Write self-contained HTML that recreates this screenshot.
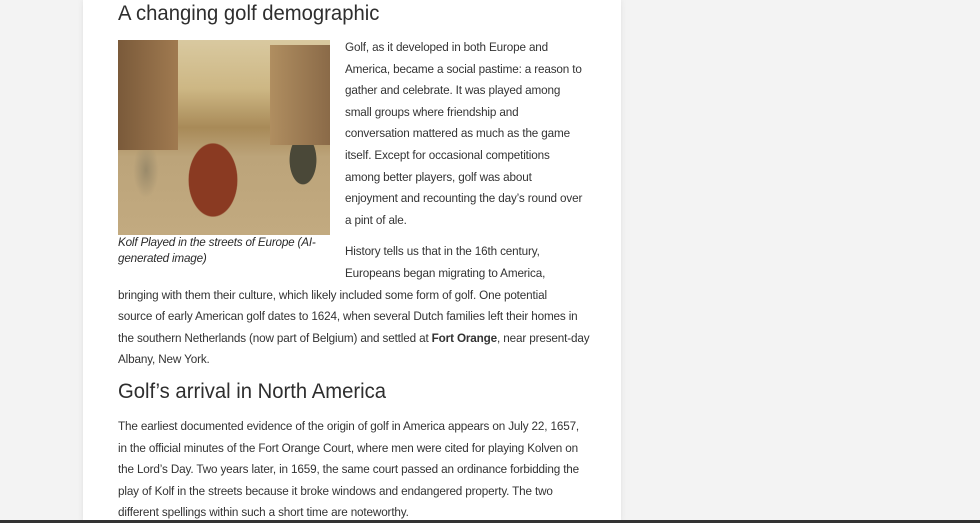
<!DOCTYPE html>
<html><head><meta charset="utf-8"><style>
body{margin:0;width:980px;height:523px;background:#f3f3f3;position:relative;overflow:hidden;font-family:"Liberation Sans",sans-serif;color:#333}
.page{position:absolute;left:83px;top:0;width:538px;height:523px;background:#fff;box-shadow:0 0 6px rgba(0,0,0,.08)}
.l{position:absolute;white-space:nowrap;font-size:12.2px;letter-spacing:-0.15px;line-height:16px;transform:scaleX(.96);transform-origin:0 0}
h2{position:absolute;margin:0;font-weight:normal;font-size:21px;color:#2e2e2e;white-space:nowrap;line-height:26px;transform:scaleX(.965);transform-origin:0 0}
.img{position:absolute;left:118px;top:40px;width:212px;height:195px;background:
radial-gradient(ellipse 40px 60px at 95px 140px,#8a3a22 0,#8a3a22 60%,transparent 62%),
radial-gradient(ellipse 22px 40px at 185px 120px,#4a4838 0,#4a4838 60%,transparent 62%),
radial-gradient(ellipse 18px 40px at 28px 130px,#9a8a6a 0,transparent 70%),
linear-gradient(180deg,#d9c9a0 0,#cdb784 25%,#a88a58 45%,#bca47a 60%,#c2aa80 100%)}
.img:before{content:"";position:absolute;left:0;top:0;width:60px;height:110px;background:linear-gradient(90deg,#7a5a3a,#a07a50)}
.img:after{content:"";position:absolute;right:0;top:5px;width:60px;height:100px;background:linear-gradient(270deg,#8a6a48,#b08e60)}
.cap{position:absolute;font-style:italic;font-size:12.2px;color:#2a2a2a;white-space:nowrap;letter-spacing:-0.2px;transform:scaleX(.96);transform-origin:0 0}
.bar{position:absolute;left:0;top:520px;width:980px;height:3px;background:#333}
</style></head><body>
<div class="page"></div>
<h2 style="left:118px;top:1px">A changing golf demographic</h2>
<div class="img"></div>
<div class="cap" style="left:118px;top:235px">Kolf Played in the streets of Europe (AI-</div>
<div class="cap" style="left:118px;top:251px">generated image)</div>
<div class="l" style="left:345px;top:39px">Golf, as it developed in both Europe and</div>
<div class="l" style="left:345px;top:61px">America, became a social pastime: a reason to</div>
<div class="l" style="left:345px;top:82px">gather and celebrate. It was played among</div>
<div class="l" style="left:345px;top:104px">small groups where friendship and</div>
<div class="l" style="left:345px;top:125px">conversation mattered as much as the game</div>
<div class="l" style="left:345px;top:147px">itself. Except for occasional competitions</div>
<div class="l" style="left:345px;top:169px">among better players, golf was about</div>
<div class="l" style="left:345px;top:190px">enjoyment and recounting the day’s round over</div>
<div class="l" style="left:345px;top:212px">a pint of ale.</div>
<div class="l" style="left:345px;top:243px">History tells us that in the 16th century,</div>
<div class="l" style="left:345px;top:265px">Europeans began migrating to America,</div>
<div class="l" style="left:118px;top:287px">bringing with them their culture, which likely included some form of golf. One potential</div>
<div class="l" style="left:118px;top:308px">source of early American golf dates to 1624, when several Dutch families left their homes in</div>
<div class="l" style="left:118px;top:330px">the southern Netherlands (now part of Belgium) and settled at <b>Fort Orange</b>, near present-day</div>
<div class="l" style="left:118px;top:351px">Albany, New York.</div>
<h2 style="left:118px;top:379px">Golf’s arrival in North America</h2>
<div class="l" style="left:118px;top:418px">The earliest documented evidence of the origin of golf in America appears on July 22, 1657,</div>
<div class="l" style="left:118px;top:440px">in the official minutes of the Fort Orange Court, where men were cited for playing Kolven on</div>
<div class="l" style="left:118px;top:461px">the Lord’s Day. Two years later, in 1659, the same court passed an ordinance forbidding the</div>
<div class="l" style="left:118px;top:483px">play of Kolf in the streets because it broke windows and endangered property. The two</div>
<div class="l" style="left:118px;top:504px">different spellings within such a short time are noteworthy.</div>
<div class="bar"></div>
</body></html>
